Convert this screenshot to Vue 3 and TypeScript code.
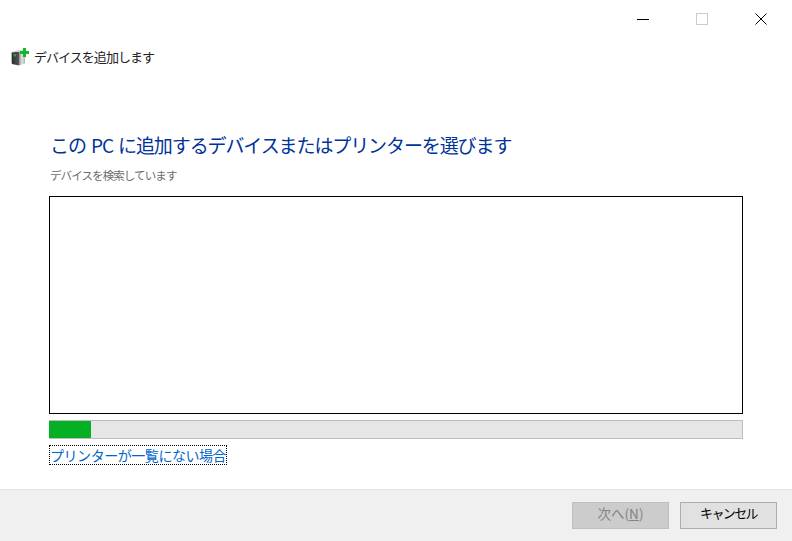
<script setup lang="ts">
const title: string = 'この PC に追加するデバイスまたはプリンターを選びます'
const progress: number = 6
</script>

<template>
  <div class="window">
    <div class="titlebar">
      <button class="win-btn"><svg width="12" height="12" viewBox="0 0 12 12"><path d="M0 6.5H12" stroke="#000" fill="none"/></svg></button>
      <button class="win-btn"><svg width="12" height="12" viewBox="0 0 12 12"><rect x="0.5" y="0.5" width="11" height="11" stroke="#cccccc" fill="none"/></svg></button>
      <button class="win-btn"><svg width="12" height="12" viewBox="0 0 12 12"><path d="M0.5 0.5L11.5 11.5M11.5 0.5L0.5 11.5" stroke="#000" fill="none"/></svg></button>
    </div>
    <div class="header">
      <svg class="app-icon" width="18" height="18" viewBox="0 0 18 18">
        <defs>
          <linearGradient id="side" x1="0" y1="0" x2="1" y2="0"><stop offset="0" stop-color="#2e2e2e"/><stop offset="1" stop-color="#555"/></linearGradient>
          <linearGradient id="face" x1="0" y1="0" x2="1" y2="0"><stop offset="0" stop-color="#8a8a8a"/><stop offset="0.5" stop-color="#e4e4e4"/><stop offset="1" stop-color="#b0b0b0"/></linearGradient>
        </defs>
        <path d="M0 4.5L3 3.2V16.5L0 15Z" fill="#b5b5b5"/>
        <path d="M1 4.5L8 3.5V17.5L1 16Z" fill="url(#side)"/>
        <path d="M8 3.5L14 4.5V15.5L8 17.5Z" fill="url(#face)"/>
        <path d="M1 4.5L6 2H12L14 4.5L8 3.5Z" fill="#d8d8d8"/>
        <rect x="2.5" y="6" width="2.5" height="2.5" fill="#2f9a46"/>
        <path d="M9 3H12V0H15V3H18V6H15V9H12V6H9Z" fill="#12b52c"/>
      </svg>
      <span class="header-text">デバイスを追加します</span>
    </div>
    <main class="content">
      <h1 class="title">{{ title }}</h1>
      <p class="status">デバイスを検索しています</p>
      <div class="list"></div>
      <div class="track"><div class="fill" :style="{ width: progress + '%' }"></div></div>
      <a class="link">プリンターが一覧にない場合</a>
    </main>
    <footer class="footer">
      <button class="btn disabled">次へ(<u>N</u>)</button>
      <button class="btn cancel">キャンセル</button>
    </footer>
  </div>
</template>

<style>
html, body { margin: 0; background: #fff; }
</style>

<style scoped>
.window {
  width: 792px;
  height: 541px;
  display: flex;
  flex-direction: column;
  background: #fff;
  overflow: hidden;
  font-family: "Noto Sans CJK JP", "Noto Sans", sans-serif;
}
.titlebar {
  height: 38px;
  display: flex;
  justify-content: flex-end;
  padding-right: 2px;
}
.win-btn {
  width: 59px;
  height: 38px;
  padding: 0;
  border: 0;
  background: none;
  display: flex;
  align-items: center;
  justify-content: center;
}
.header {
  height: 38px;
  display: flex;
  align-items: center;
  padding-left: 11px;
  gap: 5px;
}
.app-icon { flex: none; }
.header-text {
  padding-bottom: 2px;
  font-size: 13px;
  letter-spacing: -0.95px;
  color: #222;
}
.content {
  flex: 1;
  display: flex;
  flex-direction: column;
  padding: 55px 49px 0;
}
.title {
  margin: 0;
  padding-left: 1px;
  font-size: 19px;
  line-height: 27px;
  font-weight: 400;
  letter-spacing: -1.1px;
  word-spacing: 2px;
  color: #003399;
  white-space: nowrap;
}
.status {
  margin: 9px 0 0 1px;
  font-size: 11.5px;
  line-height: 16px;
  letter-spacing: -0.9px;
  color: #6d6d6d;
}
.list {
  margin-top: 13px;
  height: 216px;
  border: 1px solid #000;
}
.track {
  margin-top: 6px;
  height: 17px;
  background: #e6e6e6;
  border-top: 1px solid #bcbcbc;
  border-bottom: 1px solid #bcbcbc;
  border-right: 1px solid #bcbcbc;
}
.fill { height: 100%; background: #06b025; }
.link {
  align-self: flex-start;
  margin-top: 6px;
  padding: 0 1px;
  font-size: 14px;
  line-height: 20px;
  letter-spacing: -0.45px;
  color: #0066cc;
  outline: 1px dotted #000;
  outline-offset: -1px;
  white-space: nowrap;
}
.footer {
  height: 51px;
  background: #f0f0f0;
  border-top: 1px solid #e3e3e3;
  display: flex;
  justify-content: flex-end;
  align-items: center;
  gap: 11px;
  padding-right: 15px;
}
.btn {
  width: 97px;
  height: 27px;
  padding: 0 0 6px;
  border: 1px solid #adadad;
  background: #e1e1e1;
  color: #000;
  font-family: inherit;
  font-size: 13.5px;
}
.btn.cancel {
  font-size: 13px;
  letter-spacing: -1.6px;
}
.btn.disabled {
  background: #cccccc;
  border-color: #bfbfbf;
  color: #838383;
}
</style>
